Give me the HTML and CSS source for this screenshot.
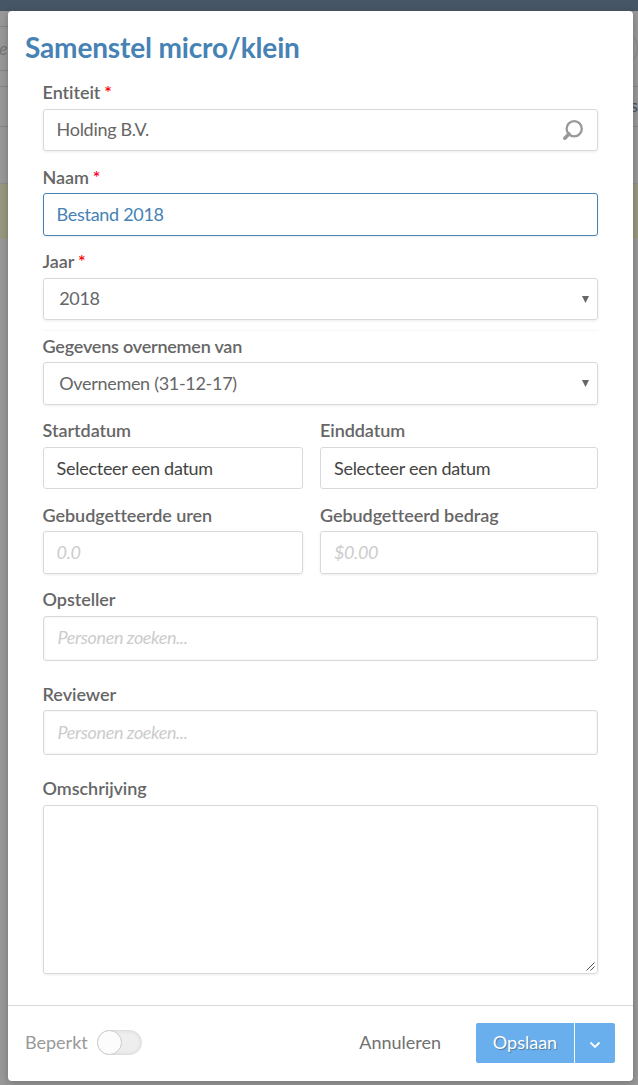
FILE: index.html
```
<!DOCTYPE html>
<html lang="nl">
<head>
<meta charset="utf-8">
<title>Samenstel micro/klein</title>
<link rel="stylesheet" href="styles.css">
</head>
<body>
<div class="page">
  <div class="topbar"></div>
  <div class="toolbar"><div class="page-search">e</div><div class="page-round"></div></div>
  <div class="page-gap"></div>
  <div class="page-head">s</div>
  <div class="page-space"></div>
  <div class="page-row"></div>
</div>
<form class="modal">
  <h1 class="title">Samenstel micro/klein</h1>
  <div class="fields">
    <div class="field"><label class="label">Entiteit <span class="req">*</span></label>
      <div class="box"><span class="value">Holding B.V.</span>
        <svg class="search" width="22" height="22" viewBox="0 0 22 22"><circle cx="12.2" cy="9.8" r="7.6" fill="none" stroke="#999" stroke-width="2.3"/><path d="M7 15 2.8 19.2" stroke="#999" stroke-width="3.6" stroke-linecap="round"/></svg></div></div>
    <div class="field"><label class="label">Naam <span class="req pink">*</span></label><div class="box focused">Bestand 2018</div></div>
    <div class="field year"><label class="label">Jaar <span class="req">*</span></label>
      <div class="box select"><span class="value">2018</span><svg class="arrow" width="7" height="7" viewBox="0 0 7 7"><path d="M0 0h7L3.5 7z" fill="#666"/></svg></div></div>
    <div class="field"><label class="label tight">Gegevens overnemen van</label>
      <div class="box select"><span class="value">Overnemen (31-12-17)</span><svg class="arrow" width="7" height="7" viewBox="0 0 7 7"><path d="M0 0h7L3.5 7z" fill="#666"/></svg></div></div>
    <div class="pair">
      <div class="field"><label class="label">Startdatum</label><div class="box date">Selecteer een datum</div></div>
      <div class="field"><label class="label">Einddatum</label><div class="box date">Selecteer een datum</div></div>
    </div>
    <div class="pair">
      <div class="field"><label class="label">Gebudgetteerde uren</label><div class="box placeholder">0.0</div></div>
      <div class="field"><label class="label">Gebudgetteerd bedrag</label><div class="box placeholder">$0.00</div></div>
    </div>
    <div class="field person"><label class="label">Opsteller</label><div class="box placeholder">Personen zoeken...</div></div>
    <div class="field person"><label class="label">Reviewer</label><div class="box placeholder">Personen zoeken...</div></div>
    <div class="field description"><label class="label">Omschrijving</label>
      <div class="box area"><svg class="grip" width="9" height="9" viewBox="0 0 9 9"><path d="M.5 8.5l8-8M4.5 8.5l4-4" stroke="#555" stroke-width="1"/></svg></div></div>
  </div>
  <div class="footer">
    <span class="restricted">Beperkt</span>
    <span class="toggle"><span class="knob"></span></span>
    <span class="cancel">Annuleren</span>
    <span class="save">Opslaan</span>
    <span class="more"><svg width="12" height="8" viewBox="0 0 12 8"><path d="M1.5 1.5 6 6l4.5-4.5" fill="none" stroke="#fff" stroke-width="1.8"/></svg></span>
  </div>
</form>
</body>
</html>
```
FILE: styles.css
```
* { box-sizing: border-box; }
body { margin: 0; height: 1085px; overflow: hidden; background: #999; font: 18px/24px Lato, sans-serif; color: #666; }
.page { height: 1085px; display: flex; flex-direction: column; background: #999; }
.topbar { height: 11px; background: #475666; }
.toolbar { height: 60px; padding-top: 15px; display: flex; justify-content: space-between; }
.page-search { width: 40px; height: 45px; border: solid #858585; border-width: 1px 0; font-style: italic; line-height: 42px; color: #777; text-indent: -1px; }
.page-round { width: 36px; height: 36px; margin-top: 4px; border: 1px solid #888; border-radius: 50%; }
.page-gap { height: 15px; }
.page-head { height: 41px; border: solid #868686; border-width: 1px 0; text-align: right; line-height: 37px; color: #4d555d; }
.page-space { height: 56px; }
.page-row { height: 56px; background: #999980; border-top: 1px solid #8e8e88; }
.modal { position: absolute; left: 8px; top: 11px; width: 625px; height: 1070px; display: flex; flex-direction: column; background: #fff; border-radius: 4px; box-shadow: 0 2px 8px rgba(0, 0, 0, .25); }
.title { margin: 0; height: 72.9px; padding: 20px 17px 0; font-size: 28px; line-height: 32px; font-weight: 700; color: #4682b4; letter-spacing: -.15px; }
.fields { height: 910px; padding: 0 35px 0 34.6px; letter-spacing: -.3px; }
.field { height: 84.5px; display: flex; flex-direction: column; }
.label { height: 25px; flex: none; padding-top: .25px; line-height: 17px; font-weight: 600; white-space: nowrap; letter-spacing: -.06px; }
.label.tight { letter-spacing: -.22px; }
.req { color: #f00; margin-left: -.6px; }
.req.pink { color: #f03; }
.box { height: 42.3px; flex: none; padding: 0 13px 1.8px; display: flex; align-items: center; justify-content: space-between; border: 1px solid #d9d9d9; border-radius: 3px; box-shadow: 0 1px 3px rgba(0, 0, 0, .08); white-space: nowrap; }
.box.focused { padding-bottom: 1px; border-color: #4682b4; color: #4682b4; }
.box.select { padding: 0 8px 1.2px 15.6px; }
.search, .arrow { margin-top: 2px; }
.box.date { padding-bottom: 0; color: #444; box-shadow: none; letter-spacing: -.28px; }
.box.placeholder { padding-bottom: 1px; color: #ccc; font-style: italic; letter-spacing: -.4px; }
.year::after { content: ""; margin-top: 9.7px; height: 1px; background: #f7f7f7; }
.pair { display: grid; grid-template-columns: 260.4px 278px; column-gap: 17px; }
.person { height: 94.5px; }
.person .box { height: 45px; padding-left: 14px; padding-bottom: 2.6px; box-shadow: inset 0 0 3px rgba(0, 0, 0, .08); }
.description .area { height: 169px; align-items: flex-end; justify-content: flex-end; padding: 0 2px 2px 0; }
.footer { height: 76px; margin-top: auto; padding: 0 18px 2px 17px; display: flex; align-items: center; border-top: 1px solid #d9d9d9; }
.restricted { color: #999; padding-bottom: 1px; }
.toggle { width: 45px; height: 25px; margin-left: 9px; border: 1px solid #ddd; border-radius: 13px; background: #eee; box-shadow: inset 0 0 4px rgba(0, 0, 0, .08); }
.knob { display: block; width: 25px; height: 25px; margin: -1px; border: 1px solid #ccc; border-radius: 50%; background: #fcfcfc; }
.cancel { margin-left: auto; margin-right: 35px; padding-bottom: 1px; color: #707070; }
.save, .more { height: 40px; display: flex; align-items: center; justify-content: center; background: #6aafed; color: #fff; }
.save { width: 98px; padding-bottom: 1px; border-radius: 2px 0 0 2px; text-shadow: 1px 1px 1px rgba(0, 0, 0, .3); }
.more { width: 40px; margin-left: 1px; border-radius: 0 2px 2px 0; padding-top: 4px; }
```
